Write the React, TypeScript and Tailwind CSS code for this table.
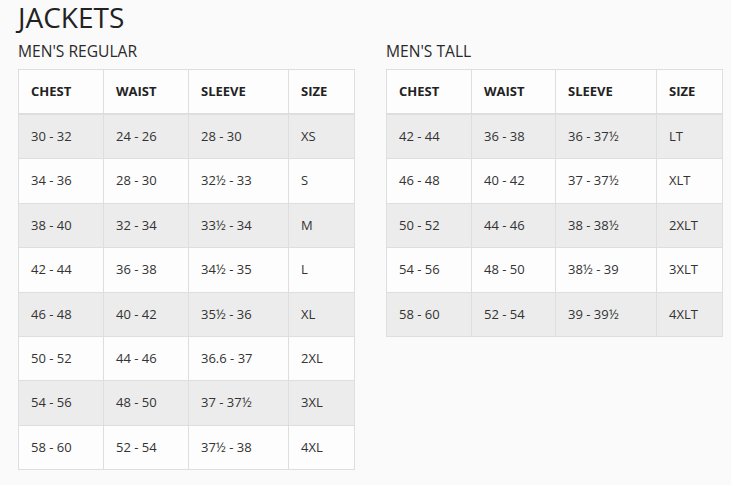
import React from "react";

type Row = [string, string, string, string];

const regular: Row[] = [
  ["30 - 32", "24 - 26", "28 - 30", "XS"],
  ["34 - 36", "28 - 30", "32½ - 33", "S"],
  ["38 - 40", "32 - 34", "33½ - 34", "M"],
  ["42 - 44", "36 - 38", "34½ - 35", "L"],
  ["46 - 48", "40 - 42", "35½ - 36", "XL"],
  ["50 - 52", "44 - 46", "36.6 - 37", "2XL"],
  ["54 - 56", "48 - 50", "37 - 37½", "3XL"],
  ["58 - 60", "52 - 54", "37½ - 38", "4XL"],
];

const tall: Row[] = [
  ["42 - 44", "36 - 38", "36 - 37½", "LT"],
  ["46 - 48", "40 - 42", "37 - 37½", "XLT"],
  ["50 - 52", "44 - 46", "38 - 38½", "2XLT"],
  ["54 - 56", "48 - 50", "38½ - 39", "3XLT"],
  ["58 - 60", "52 - 54", "39 - 39½", "4XLT"],
];

function SizeTable({ title, rows, widths }: { title: string; rows: Row[]; widths: number[] }) {
  return (
    <div className="flex flex-col">
      <h3 className="text-[15.6px] leading-[20px] text-[#2a2a2a] mt-[7px] mb-[8px]">{title}</h3>
      <table className="table-fixed border-collapse bg-[#fdfdfd] w-[336px]">
        <colgroup>
          {widths.map((w, i) => (
            <col key={i} style={{ width: w }} />
          ))}
        </colgroup>
        <thead>
          <tr>
            {["CHEST", "WAIST", "SLEEVE", "SIZE"].map((h) => (
              <th
                key={h}
                className="border border-[#dedede] border-b-2 text-left font-bold text-[13px] leading-[19px] px-[12px] py-[12px] text-[#222]"
              >
                {h}
              </th>
            ))}
          </tr>
        </thead>
        <tbody>
          {rows.map((r, i) => (
            <tr key={i} className={i % 2 === 0 ? "bg-[#ececec]" : "bg-[#fdfdfd]"}>
              {r.map((c, j) => (
                <td
                  key={j}
                  className="border border-[#dedede] text-[13px] leading-[19.4px] px-[12px] py-[12px] text-[#333]"
                >
                  {c}
                </td>
              ))}
            </tr>
          ))}
        </tbody>
      </table>
    </div>
  );
}

export default function App() {
  return (
    <div
      className="w-[731px] h-[485px] bg-[#fafafa] pl-[18px] overflow-hidden"
      style={{ fontFamily: '"Open Sans", "Noto Sans", sans-serif' }}
    >
      <h1 className="text-[28px] leading-[34px] text-[#222] font-normal">JACKETS</h1>
      <div className="flex gap-[31px]">
        <SizeTable title="MEN'S REGULAR" rows={regular} widths={[85, 85, 100, 66]} />
        <SizeTable title="MEN'S TALL" rows={tall} widths={[85, 84, 101, 66]} />
      </div>
    </div>
  );
}
